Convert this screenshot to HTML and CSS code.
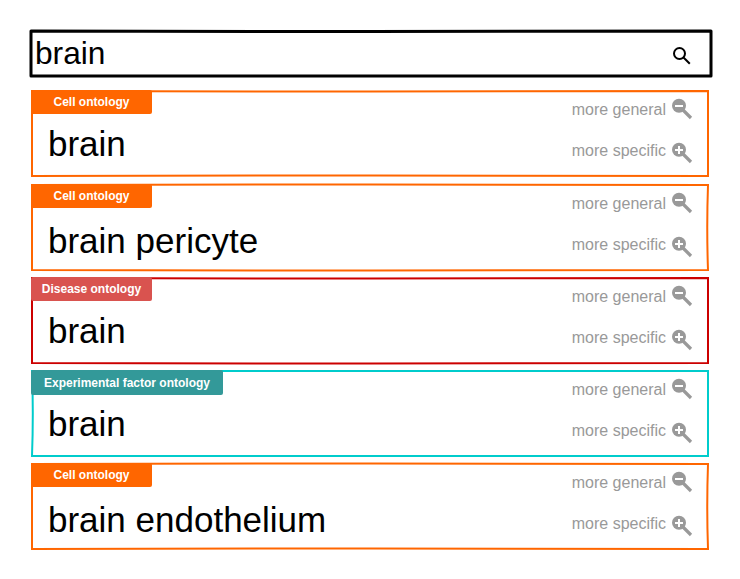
FILE: index.html
```html
<!DOCTYPE html>
<html lang="en">
<head>
<meta charset="utf-8">
<title>Ontology search</title>
<link rel="stylesheet" href="styles.css">
</head>
<body>
<svg class="defs" width="0" height="0">
  <symbol id="minus" viewBox="0 0 22 22"><path class="handle" d="M11.5 11.5L20 20"/><circle cx="8" cy="7.8" r="7"/><path class="sign" d="M4 8h8"/></symbol>
  <symbol id="plus" viewBox="0 0 22 22"><path class="handle" d="M11.5 11.5L20 20"/><circle cx="8" cy="7.8" r="7"/><path class="sign" d="M4 8h8M8 4v8"/></symbol>
</svg>
<main class="page">
  <div class="search">
    <svg class="frame" viewBox="0 0 683 48"><path d="M2 2Q342 3.2 682 2L682 47H2Z"/></svg>
    <span class="query">brain</span>
    <svg class="lens" viewBox="0 0 18 18"><circle cx="6.5" cy="6.5" r="5.5"/><path d="M10.5 10.5L16.8 16.8"/></svg>
  </div>
  <ul class="results">
    <li class="card cell">
      <svg class="frame" viewBox="0 0 678 87"><path d="M1 1Q339 2.2 677 1V86Q339 84.8 1 86Z"/></svg>
      <div class="info"><span class="tag">Cell ontology</span><span class="term">brain</span></div>
      <div class="actions"><span class="action">more general<svg class="zoom"><use href="#minus"/></svg></span><span class="action">more specific<svg class="zoom in"><use href="#plus"/></svg></span></div>
    </li>
    <li class="card cell low">
      <svg class="frame" viewBox="0 0 678 87"><path d="M1 1Q339 -.2 677 1Q675.5 43 677 86Q339 87.2 1 86Z"/></svg>
      <div class="info"><span class="tag">Cell ontology</span><span class="term">brain pericyte</span></div>
      <div class="actions"><span class="action">more general<svg class="zoom"><use href="#minus"/></svg></span><span class="action">more specific<svg class="zoom in"><use href="#plus"/></svg></span></div>
    </li>
    <li class="card disease">
      <svg class="frame" viewBox="0 0 678 87"><path d="M1 1Q339 2.2 677 1V86Q339 87.2 1 86Z"/></svg>
      <div class="info"><span class="tag">Disease ontology</span><span class="term">brain</span></div>
      <div class="actions"><span class="action">more general<svg class="zoom"><use href="#minus"/></svg></span><span class="action">more specific<svg class="zoom in"><use href="#plus"/></svg></span></div>
    </li>
    <li class="card factor">
      <svg class="frame" viewBox="0 0 678 87"><path d="M1 1H677V86H1Q2.6 43 1 1Z"/></svg>
      <div class="info"><span class="tag">Experimental factor ontology</span><span class="term">brain</span></div>
      <div class="actions"><span class="action">more general<svg class="zoom"><use href="#minus"/></svg></span><span class="action">more specific<svg class="zoom in"><use href="#plus"/></svg></span></div>
    </li>
    <li class="card cell low">
      <svg class="frame" viewBox="0 0 678 87"><path d="M1 1Q339 -.2 677 1Q675.5 43 677 86Q339 84.8 1 86Z"/></svg>
      <div class="info"><span class="tag">Cell ontology</span><span class="term">brain endothelium</span></div>
      <div class="actions"><span class="action">more general<svg class="zoom"><use href="#minus"/></svg></span><span class="action">more specific<svg class="zoom in"><use href="#plus"/></svg></span></div>
    </li>
  </ul>
</main>
</body>
</html>
```
FILE: styles.css
```css
* { box-sizing: border-box; }
body { margin: 0; background: #fff; color: #000; font-family: "Liberation Sans", Arial, sans-serif; }
.defs { position: absolute; }
.page { padding: 29px 0 0 29px; }
.search { position: relative; display: flex; justify-content: space-between; width: 683px; height: 48px; padding: 0 21px 0 6px; }
.frame { position: absolute; inset: 0; width: 100%; height: 100%; overflow: visible; fill: none; stroke-width: 2; }
.search .frame { stroke: #000; stroke-width: 3; stroke-linejoin: round; }
.query { font-size: 31.7px; line-height: 36px; margin-top: 6px; }
.lens { width: 18px; height: 18px; margin-top: 18px; fill: none; stroke: #000; stroke-width: 2; }
.results { list-style: none; margin: 13px 0 0 2px; padding: 0; width: 678px; }
.card { position: relative; display: flex; justify-content: space-between; height: 87px; margin-bottom: 6px; }
.card:first-child { margin-bottom: 7px; }
.cell { color: #f60; }
.disease { color: #c00; }
.factor { color: #0cc; }
.card .frame { stroke: currentColor; }
.info { position: relative; display: flex; flex-direction: column; align-items: flex-start; }
.tag { min-width: 121px; height: 24px; padding: 0 13px; border-radius: 2px; background: #f60; color: #fff; font-size: 12px; font-weight: bold; line-height: 24px; text-align: center; white-space: nowrap; }
.disease .tag { background: #d9534f; padding: 0 10px; }
.factor .tag { background: #399; height: 25px; line-height: 26px; margin-bottom: -1px; }
.term { margin: 10px 0 0 17px; color: #000; font-size: 35px; line-height: 40px; }
.low .term { margin-top: 13px; }
.actions { display: flex; flex-direction: column; gap: 19px; padding: 8px 16px 0 0; }
.action { display: flex; justify-content: flex-end; gap: 5px; height: 22px; color: #999; font-size: 16px; line-height: 23px; }
.zoom { width: 22px; height: 22px; fill: #999; }
.zoom.in { margin-top: 3px; }
.handle { stroke: #999; stroke-width: 3.2; }
.sign { stroke: #fff; stroke-width: 2; }
```
